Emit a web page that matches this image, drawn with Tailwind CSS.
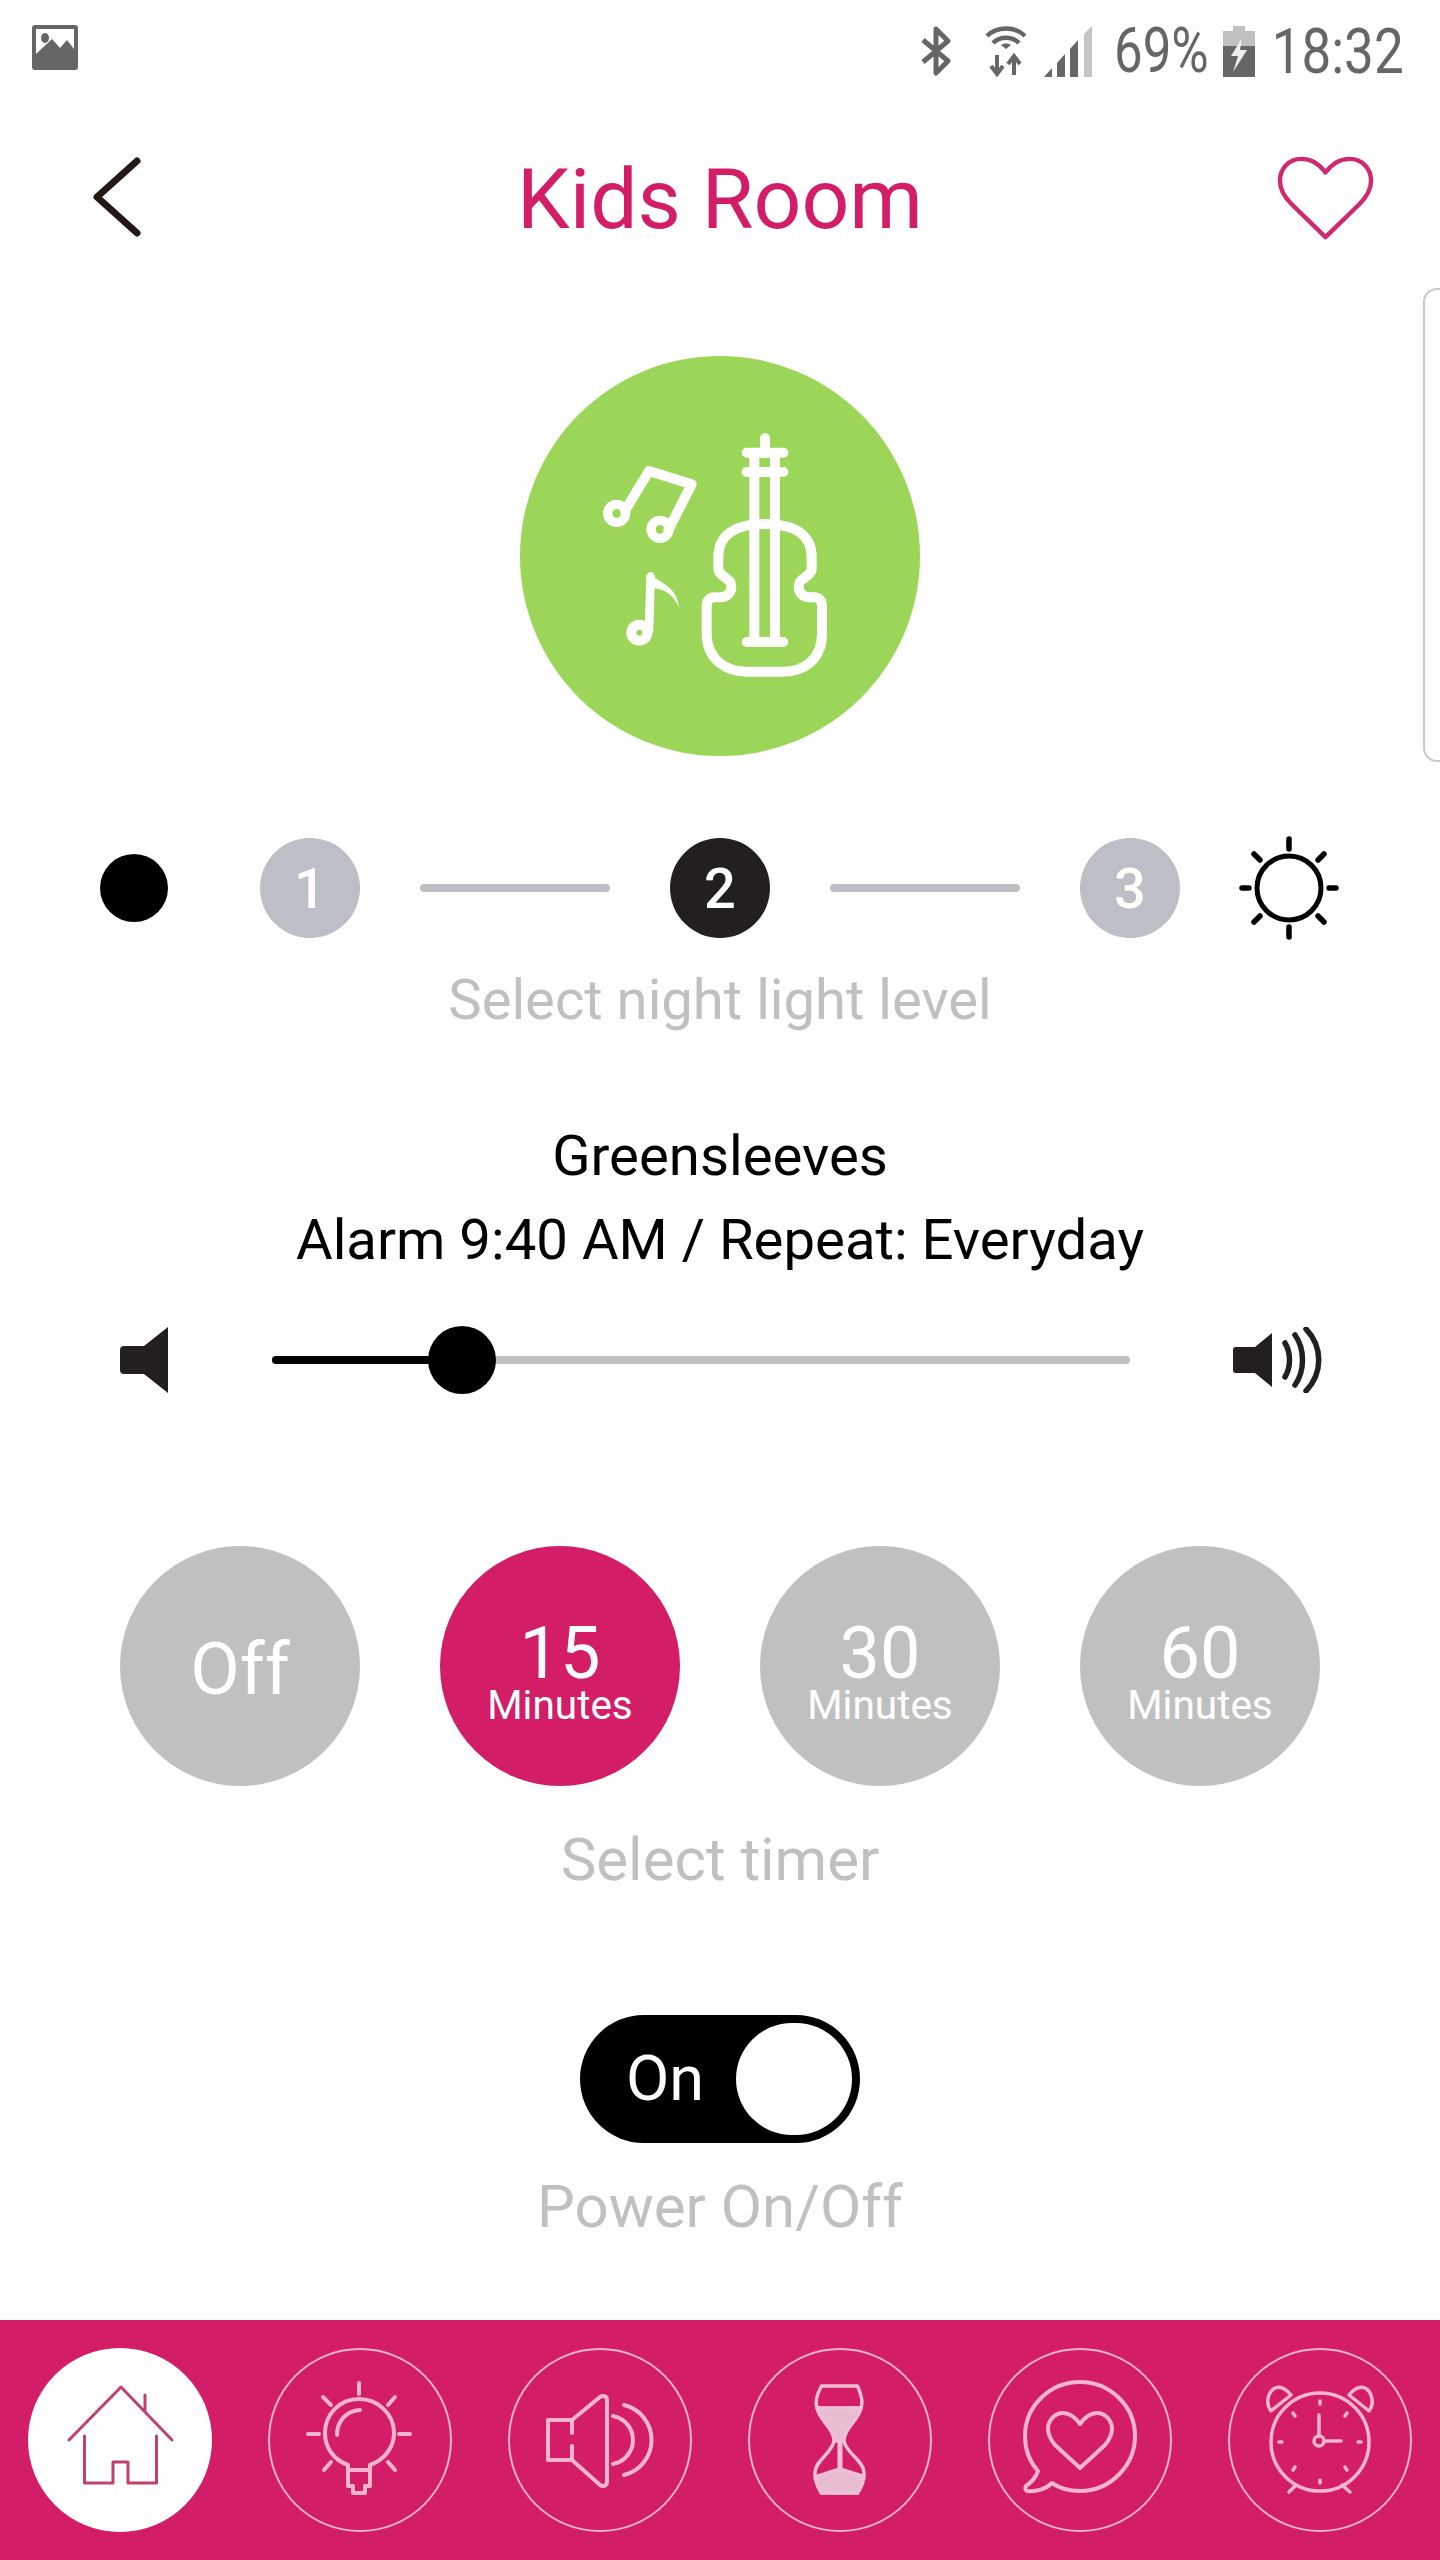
<!DOCTYPE html>
<html lang="en">
<head>
    <meta charset="UTF-8">
    <title>Kids Room</title>
    <script src="https://cdn.jsdelivr.net/npm/@tailwindcss/browser@4"></script>
</head>
<body class="bg-white">
<div class="relative w-[1440px] h-[2560px] flex flex-col overflow-hidden bg-white font-['Roboto',sans-serif]">

    <!-- scroll handle on the right edge -->
    <div class="absolute right-0 top-[288px] w-[17px] h-[474px] rounded-l-[14px] border-2 border-r-0 border-[#c8c8c8]"></div>

    <!-- status bar -->
    <div class="h-[100px] flex items-start text-[#666666]">
        <svg class="ml-[32px] mt-[25px]" width="46" height="45" viewBox="0 0 46 45">
            <rect width="46" height="45" rx="3" fill="#666"/>
            <path d="M4 4H42V24L35 15 28 23 20 14 4 29Z" fill="#fff"/>
            <ellipse cx="13" cy="13" rx="4" ry="5" fill="#666"/>
        </svg>
        <svg class="ml-[843px] mt-[25px]" width="30" height="52" viewBox="0 0 30 52" fill="none" stroke="#666" stroke-width="5">
            <path d="M2 15L27 36 15 48V4L27 16 2 37" stroke-linejoin="round"/>
        </svg>
        <svg class="ml-[34px] mt-[25px]" width="42" height="52" viewBox="0 0 42 52" fill="none" stroke="#666" stroke-width="4.5">
            <path d="M2 11C12 1 30 1 40 11"/>
            <path d="M8 18C15 11 27 11 34 18"/>
            <path d="M21 24l-5-4c3-2 7-2 10 0z" fill="#666" stroke="none"/>
            <path d="M12 30V48M6 41l6 8 6-8" stroke-width="4"/>
            <path d="M29 50V32M23 39l6-8 6 8" stroke-width="4"/>
        </svg>
        <svg class="ml-[17px] mt-[26px]" width="48" height="51" viewBox="0 0 48 51">
            <path d="M0 51L8 42V51Z" fill="#666"/>
            <path d="M13 37L21 28V51H13Z" fill="#666"/>
            <path d="M26 23L34 14V51H26Z" fill="#666"/>
            <path d="M40 8L48 0V51H40Z" fill="#c4c4c4"/>
        </svg>
        <span class="ml-[22px] mt-[16px] text-[51px] leading-[70px] inline-block scale-y-[1.22]">69%</span>
        <svg class="ml-[14px] mt-[26px]" width="32" height="51" viewBox="0 0 32 51">
            <path d="M10 0H22V5H32V20H0V5H10Z" fill="#c0c0c0"/>
            <path d="M0 20H32V51H0Z" fill="#666"/>
            <path d="M19 12L8 30H15L10 46 24 24H17Z" fill="#eee"/>
        </svg>
        <span class="ml-[17px] mt-[16px] text-[53px] leading-[70px] inline-block scale-y-[1.2]">18:32</span>
    </div>

    <!-- header -->
    <div class="h-[194px] flex items-center">
        <div class="w-[300px] pl-[91px]">
            <svg width="52" height="80" viewBox="0 0 52 80" fill="none" stroke="#231815" stroke-width="7" stroke-linecap="round" stroke-linejoin="round">
                <path d="M46 4L6 40 46 76"/>
            </svg>
        </div>
        <div class="flex-1 pt-[6px] text-center text-[84px] leading-[100px] text-[#d31d67]">Kids Room</div>
        <div class="w-[300px] flex justify-end pr-[66px] pt-[2px]">
            <svg width="97" height="84" viewBox="0 0 99 87" preserveAspectRatio="none" fill="none" stroke="#d0296f" stroke-width="4.5" stroke-linejoin="round">
                <path d="M49.5 17C42 7 34 3 25 3 12 3 3 13 3 26 3 36 8 43 15 50L49.5 84 84 50C91 43 96 36 96 26 96 13 87 3 74 3 65 3 57 7 49.5 17Z"/>
            </svg>
        </div>
    </div>

    <!-- room icon -->
    <div class="mt-[62px] mx-auto w-[400px] h-[400px] rounded-full bg-[#9bd658]">
        <svg width="400" height="400" viewBox="60 48 1200 1200" fill="none" stroke="#fff" stroke-width="30" stroke-linecap="round" stroke-linejoin="round">
            <path d="M795 295V340M740 338H850M740 396H850M740 906H850"/>
            <path d="M763 345V900M825 345V900"/>
            <path d="M795 552C700 552 655 590 655 650V685C655 705 680 712 690 725 700 745 690 772 660 772H645C628 772 620 782 620 800V880C620 960 680 995 740 995H850C910 995 966 960 966 880V800C966 782 958 772 941 772H930C900 772 890 745 900 725 910 712 935 705 935 685V650C935 590 890 552 795 552Z"/>
            <circle cx="350" cy="520" r="27" stroke-width="28"/>
            <circle cx="480" cy="568" r="27" stroke-width="28"/>
            <path d="M375 512L447 393 575 433 505 570"/>
            <circle cx="418" cy="878" r="24" stroke-width="30"/>
            <path d="M447 870L452 710" stroke-width="26"/>
            <path d="M447 695C470 730 530 730 537 803 520 760 490 748 460 745Z" fill="#fff" stroke="none"/>
        </svg>
    </div>

    <!-- night light level -->
    <div class="mt-[80px] h-[104px] flex items-center pl-[100px]">
        <div class="w-[68px] h-[68px] rounded-full bg-black"></div>
        <div class="ml-[92px] w-[100px] h-[100px] pt-[2px] rounded-full bg-[#bcbfc6] flex items-center justify-center text-white text-[56px] font-medium">1</div>
        <div class="ml-[60px] w-[190px] h-[8px] rounded-full bg-[#bcbfc6]"></div>
        <div class="ml-[60px] w-[100px] h-[100px] pt-[2px] rounded-full bg-[#231f20] flex items-center justify-center text-white text-[56px] font-medium">2</div>
        <div class="ml-[60px] w-[190px] h-[8px] rounded-full bg-[#bcbfc6]"></div>
        <div class="ml-[60px] w-[100px] h-[100px] pt-[2px] rounded-full bg-[#bcbfc6] flex items-center justify-center text-white text-[56px] font-medium">3</div>
        <svg class="ml-[57px]" width="104" height="104" viewBox="0 0 104 104" fill="none" stroke="#000" stroke-width="5" stroke-linecap="round">
            <circle cx="52" cy="52" r="32"/>
            <path d="M52 3V13M52 91V101M5 52H12M92 52H99M17 18L23 24M81 80L87 86M17 86L23 80M81 24L87 18" stroke-width="5.5"/>
        </svg>
    </div>
    <div class="mt-[25px] h-[70px] text-center text-[56.2px] leading-[70px] text-[#c0c0c0]">Select night light level</div>

    <!-- track info -->
    <div class="mt-[79px] text-center text-[56.3px] leading-[84px] text-black">
        <div>Greensleeves</div>
        <div>Alarm 9:40 AM / Repeat: Everyday</div>
    </div>

    <!-- volume -->
    <div class="mt-[44px] h-[68px] flex items-center pl-[120px]">
        <svg width="48" height="66" viewBox="0 0 48 66">
            <path d="M48 0V66L24 47H4Q0 47 0 43V23Q0 19 4 19H24Z" fill="#231f20"/>
        </svg>
        <div class="relative ml-[104px] w-[858px] h-[8px] rounded-full bg-[#c0c0c0]">
            <div class="w-[190px] h-[8px] rounded-full bg-black"></div>
            <div class="absolute left-[156px] top-[-30px] w-[68px] h-[68px] rounded-full bg-black"></div>
        </div>
        <svg class="ml-[103px]" width="90" height="66" viewBox="0 0 90 66" fill="none" stroke="#231f20" stroke-width="5.5" stroke-linecap="round">
            <path d="M39 6V60L22 46H3Q0 46 0 43V23Q0 20 3 20H22Z" fill="#231f20" stroke="none"/>
            <path d="M52 16C58 26 58 40 52 50"/>
            <path d="M62 8C72 22 72 44 62 58"/>
            <path d="M73 2C90 20 90 46 73 64"/>
        </svg>
    </div>

    <!-- timer -->
    <div class="mt-[152px] flex justify-center gap-[80px] text-white">
        <div class="w-[240px] h-[240px] pt-[8px] rounded-full bg-[#c0c0bf] flex items-center justify-center text-[72px]">Off</div>
        <div class="w-[240px] h-[240px] pt-[78px] rounded-full bg-[#d31d67] flex flex-col items-center">
            <div class="text-[72px] leading-[60px]">15</div>
            <div class="mt-[1px] text-[40.5px] leading-[40px]">Minutes</div>
        </div>
        <div class="w-[240px] h-[240px] pt-[78px] rounded-full bg-[#c0c0bf] flex flex-col items-center">
            <div class="text-[72px] leading-[60px]">30</div>
            <div class="mt-[1px] text-[40.5px] leading-[40px]">Minutes</div>
        </div>
        <div class="w-[240px] h-[240px] pt-[78px] rounded-full bg-[#c0c0bf] flex flex-col items-center">
            <div class="text-[72px] leading-[60px]">60</div>
            <div class="mt-[1px] text-[40.5px] leading-[40px]">Minutes</div>
        </div>
    </div>
    <div class="mt-[39px] h-[70px] text-center text-[60px] leading-[70px] text-[#c0c0c0]">Select timer</div>

    <!-- power -->
    <div class="mt-[120px] mx-auto w-[280px] h-[128px] rounded-full bg-black flex items-center justify-between pl-[46px] pr-[8px]">
        <span class="text-white text-[63px]">On</span>
        <div class="w-[116px] h-[112px] rounded-full bg-white"></div>
    </div>
    <div class="mt-[29px] h-[70px] text-center text-[60px] leading-[70px] text-[#c0c0c0]">Power On/Off</div>

    <!-- bottom nav -->
    <div class="mt-auto h-[240px] bg-[#d31d67] flex items-center justify-center gap-[56px]">
        <div class="w-[184px] h-[184px] rounded-full bg-white">
            <svg width="184" height="184" viewBox="0 0 184 184" fill="none" stroke="#c0406f" stroke-width="3" stroke-linecap="round" stroke-linejoin="round">
                <path d="M41 92L93 39 144 92M117 47V63"/>
                <path d="M56.5 88V135H85V114H100V135H128.5V88"/>
            </svg>
        </div>
        <div class="w-[184px] h-[184px] rounded-full border-2 border-[#f3b3cc]">
            <svg class="-m-[2px]" width="184" height="184" viewBox="0 0 184 184" fill="none" stroke="#f5b5cd" stroke-width="4" stroke-linecap="round" stroke-linejoin="round">
                <path d="M91 35V46M55 49L63 57M127 49L120 57M40 86H51M131 86H142M56 122L63 114M127 122L120 114"/>
                <path d="M80 122V117C66 112 57 100 57 85 57 66 72 51 91 51 110 51 126 66 126 85 126 100 116 112 102 117V122Z"/>
                <path d="M80 122V138H85V145H97V138H102V122"/>
                <path d="M69 87C69 73 78 63 92 62"/>
            </svg>
        </div>
        <div class="w-[184px] h-[184px] rounded-full border-2 border-[#f3b3cc]">
            <svg class="-m-[2px]" width="184" height="184" viewBox="0 0 184 184" fill="none" stroke="#f5b5cd" stroke-width="4" stroke-linecap="round" stroke-linejoin="round">
                <path d="M64 85V72H40V112H64V98"/>
                <path d="M64 72L92 49C95 47 99 48 99 52V134C99 138 95 139 92 137L64 112"/>
                <path d="M105 68A24.4 24.4 0 0 1 105 116"/>
                <path d="M116 57A36 36 0 0 1 116 127"/>
            </svg>
        </div>
        <div class="w-[184px] h-[184px] rounded-full border-2 border-[#f3b3cc]">
            <svg class="-m-[2px]" width="184" height="184" viewBox="0 0 184 184" fill="none" stroke="#efc0d3" stroke-width="3.5" stroke-linejoin="round">
                <path d="M73.5 38H109.5C114 48 115 55 113 60H69C67 55 68 48 73.5 38Z"/>
                <path d="M69 60H113C111 72 96 80 96 93H86C86 80 71 72 69 60Z" fill="#e9bdd0"/>
                <path d="M86 93C84 105 68 112 67 124 66 132 70 139 73.5 145H109.5C113 139 117 132 116 124 115 112 98 105 96 93"/>
                <path d="M92 93V121" stroke-width="5"/>
                <path d="M70 128L92 121 114 128C116 134 113 140 109.5 145H73.5C70 140 68 134 70 128Z" fill="#e9bdd0"/>
            </svg>
        </div>
        <div class="w-[184px] h-[184px] rounded-full border-2 border-[#f3b3cc]">
            <svg class="-m-[2px]" width="184" height="184" viewBox="0 0 184 184" fill="none" stroke="#f5b5cd" stroke-width="4" stroke-linecap="round" stroke-linejoin="round">
                <path d="M50 123C41 113 37 101 37 88 37 58 62 34 92 34 122 34 147 58 147 88 147 118 122 143 92 143 81 143 71 140 64 135 58 141 48 144 39 143 37 142 37 140 38 138 44 134 48 129 50 123Z"/>
                <path d="M92 76C87 69 82 65 75 65 67 65 60 72 60 81 60 87 63 92 67 97L92 120 117 97C121 92 124 87 124 81 124 72 117 65 109 65 102 65 97 69 92 76Z"/>
            </svg>
        </div>
        <div class="w-[184px] h-[184px] rounded-full border-2 border-[#f3b3cc]">
            <svg class="-m-[2px]" width="184" height="184" viewBox="0 0 184 184" fill="none" stroke="#f5b5cd" stroke-width="3.5" stroke-linecap="round" stroke-linejoin="round">
                <circle cx="92" cy="94" r="49"/>
                <path d="M43 63C37 55 40 44 47 40 52 38 58 41 63 47Z"/>
                <path d="M141 63C147 55 144 44 137 40 132 38 126 41 121 47Z"/>
                <circle cx="91" cy="93" r="5"/>
                <path d="M91 88V67M96 93H113"/>
                <path d="M92 53V56M92 132V135M51 94H54M130 94H133M65 65L67 68M119 65L117 68M65 122L67 119M119 122L117 119"/>
                <path d="M68 137L61 144M114 137L122 144"/>
            </svg>
        </div>
    </div>
</div>
</body>
</html>
